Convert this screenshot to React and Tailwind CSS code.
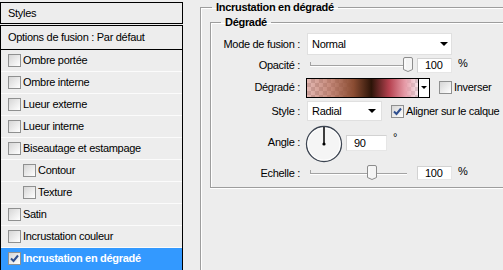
import React from "react";

const styleItems = [
  { label: "Ombre portée" },
  { label: "Ombre interne" },
  { label: "Lueur externe" },
  { label: "Lueur interne" },
  { label: "Biseautage et estampage" },
  { label: "Contour", indent: true },
  { label: "Texture", indent: true },
  { label: "Satin" },
  { label: "Incrustation couleur" },
  { label: "Incrustation en dégradé", checked: true, selected: true },
];

function Check({ checked }) {
  return (
    <span className="w-[13px] h-[13px] shrink-0 border border-[#8f9090] bg-linear-to-br from-[#d6d6d6] to-white flex items-center justify-center">
      {checked && (
        <svg width="9" height="9" viewBox="0 0 9 9">
          <path d="M1 4.5 L3.5 7 L8 1.5" fill="none" stroke="#2f4f8f" strokeWidth="2" />
        </svg>
      )}
    </span>
  );
}

function Tri() {
  return (
    <svg width="8" height="4" viewBox="0 0 8 4" className="shrink-0">
      <path d="M0 0H8L4 4Z" fill="#000" />
    </svg>
  );
}

function Slider({ width, knob }) {
  return (
    <div className="relative h-[16px] shrink-0" style={{ width }}>
      <div className="absolute left-0 right-0 top-[8px] h-[1px] bg-[#a3a3a3] shadow-[0_1px_0_#fff]" />
      <div className="absolute left-0 top-[5px] w-[1px] h-[4px] bg-[#a3a3a3]" />
      <svg
        width="10"
        height="15"
        viewBox="0 0 10 15"
        className="absolute top-0"
        style={{ left: knob }}
      >
        <path
          d="M2 0.5H8Q9.5 0.5 9.5 2V12.5L5 14.5L0.5 12.5V2Q0.5 0.5 2 0.5Z"
          fill="#f4f4f4"
          stroke="#8c8c8c"
        />
        <path d="M2 2V12" stroke="#fff" />
      </svg>
    </div>
  );
}

function Field({ value, className }) {
  return (
    <div
      className={`bg-white border border-[#d2d2d2] border-b-[#e6e6e6] border-r-[#e6e6e6] flex items-center pl-[7px] shrink-0 ${className}`}
    >
      {value}
    </div>
  );
}

export default function App() {
  return (
    <div className="flex w-[503px] h-[270px] overflow-hidden bg-[#ededed] text-[11px] tracking-[-0.3px] text-black font-['Liberation_Sans',Arial,sans-serif] leading-none">
      {/* liste des styles */}
      <div className="w-[183px] shrink-0 flex flex-col pt-[2px]">
        <div className="h-[23px] border border-black flex items-center pl-[7px]">Styles</div>
        <div className="mt-[1px] flex-1 border-x border-t border-black flex flex-col">
          <div className="h-[24px] shrink-0 border-b border-black flex items-center pl-[7px]">
            Options de fusion : Par défaut
          </div>
          {styleItems.map((item) => (
            <div
              key={item.label}
              className={`h-[22px] shrink-0 flex items-center gap-[2px] border-b ${
                item.selected
                  ? "bg-[#3399ff] text-white font-bold border-[#3399ff]"
                  : "border-[#fbfbfb]"
              } ${item.indent ? "pl-[22px]" : "pl-[7px]"}`}
            >
              <Check checked={item.checked} />
              <span>{item.label}</span>
            </div>
          ))}
        </div>
      </div>

      {/* panneau des réglages */}
      <div className="flex-1 pl-[17px]">
        <fieldset className="min-w-0 h-[300px] border-l border-t border-[#9d9d9d] shadow-[inset_1px_1px_0_#fff]">
          <legend className="ml-[11px] px-[4px] font-bold leading-[14px]">Incrustation en dégradé</legend>
          <fieldset className="ml-[9px] mt-[1px] w-[320px] border-l border-t border-b border-[#9d9d9d] shadow-[inset_1px_1px_0_#fff,0_1px_0_#fff] pb-[6px]">
            <legend className="ml-[10px] px-[4px] font-bold leading-[14px]">Dégradé</legend>

            <div className="mt-[4px] h-[22px] flex items-center">
              <span className="w-[89px] text-right">Mode de fusion :</span>
              <div className="ml-[7px] w-[145px] h-[22px] bg-white border border-[#e0e0e0] flex items-center justify-between pl-[4px] pr-[3px]">
                <span>Normal</span>
                <Tri />
              </div>
            </div>

            <div className="mt-[1px] h-[18px] flex items-center">
              <span className="w-[89px] text-right">Opacité :</span>
              <div className="ml-[10px]">
                <Slider width={102} knob={93} />
              </div>
              <Field value="100" className="ml-[5px] w-[35px] h-[15px]" />
              <span className="ml-[6px] self-start mt-[2px]">%</span>
            </div>

            <div className="mt-[3px] h-[21px] flex items-center">
              <span className="w-[89px] text-right">Dégradé :</span>
              <div className="ml-[6px] w-[124px] h-[20px] border border-black flex shrink-0">
                <div className="flex-1 bg-[linear-gradient(to_right,rgba(205,125,115,0.55)_0%,rgba(180,105,85,0.8)_22%,#8a4c32_42%,#2c1408_58%,#b5414f_74%,#e59aa6_88%,rgba(240,195,205,0.45)_100%),repeating-conic-gradient(#c8c8c8_0%_25%,#ffffff_0%_50%)] bg-[length:100%_100%,8px_8px]" />
                <div className="w-[11px] border-l border-black bg-white flex items-center justify-center">
                  <svg width="6" height="3" viewBox="0 0 6 3">
                    <path d="M0 0H6L3 3Z" fill="#000" />
                  </svg>
                </div>
              </div>
              <span className="ml-[9px]">
                <Check />
              </span>
              <span className="ml-[2px]">Inverser</span>
            </div>

            <div className="mt-[2px] h-[22px] flex items-center">
              <span className="w-[89px] text-right">Style :</span>
              <div className="ml-[7px] w-[75px] h-[20px] bg-white border border-[#e0e0e0] flex items-center justify-between pl-[4px] pr-[5px] shrink-0">
                <span>Radial</span>
                <Tri />
              </div>
              <span className="ml-[9px]">
                <Check checked />
              </span>
              <span className="ml-[2px]">Aligner sur le calque</span>
            </div>

            <div className="mt-[3px] h-[38px] flex items-center">
              <span className="w-[89px] text-right pb-[3px]">Angle :</span>
              <svg width="38" height="38" viewBox="0 0 38 38" className="ml-[5px] shrink-0">
                <circle cx="19" cy="19" r="17.5" fill="#f5f5f5" stroke="#3d4552" strokeWidth="1.3" />
                <circle cx="19" cy="19" r="16.2" fill="none" stroke="#ffffff" strokeWidth="1" />
                <path d="M19 19V2" stroke="#000" strokeWidth="1.5" />
                <circle cx="19" cy="19" r="1.6" fill="#000" />
              </svg>
              <Field value="90" className="ml-[3px] w-[41px] h-[16px] self-start mt-[10px]" />
              <span className="ml-[6px] self-start mt-[7px]">°</span>
            </div>

            <div className="mt-[2px] h-[16px] flex items-center">
              <span className="w-[89px] text-right">Echelle :</span>
              <div className="ml-[10px]">
                <Slider width={97} knob={57} />
              </div>
              <Field value="100" className="ml-[10px] w-[35px] h-[14px]" />
              <span className="ml-[6px] self-start mt-[1px]">%</span>
            </div>
          </fieldset>
        </fieldset>
      </div>
    </div>
  );
}
